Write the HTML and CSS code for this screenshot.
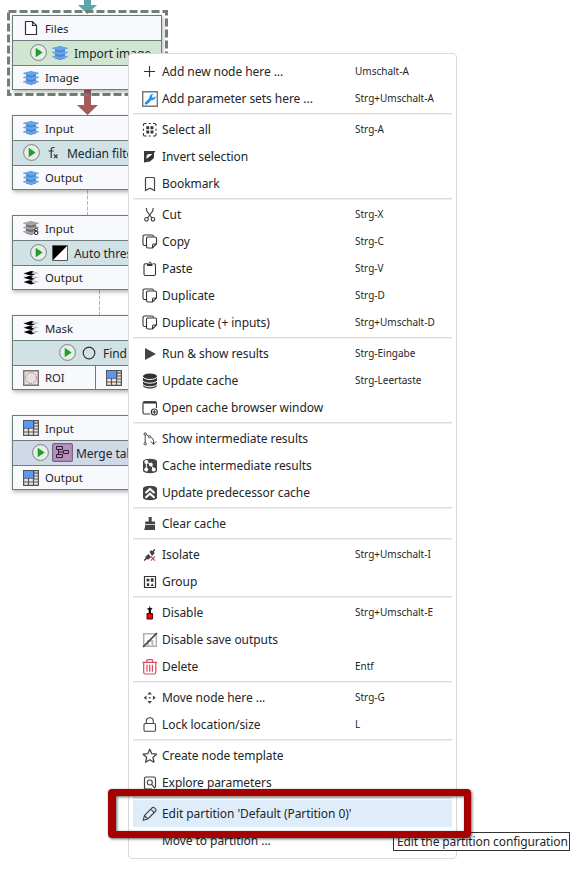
FILE: index.html
```html
<!DOCTYPE html>
<html lang="en">
<head>
<meta charset="utf-8">
<title>Node menu</title>
<link rel="stylesheet" href="styles.css">
</head>
<body>
<svg class="defs" width="0" height="0">
  <symbol id="stack" viewBox="0 0 16 16"><path d="M3 3h10v10.500L8 15l-5-1.500z" fill="#4a84ca"/><g fill="#67a5ea"><path d="M5 1.800 8 .8l3 1 4.800.9v1L11 5 8 5.700 5 5 .2 3.700v-1z"/><path d="M.2 7 3 6.300l5 1.300 5-1.300 2.800.7v1L11 9.300l-3 .7-3-.7L.2 8z"/><path d="M.2 11.300 3 10.600l5 1.300 5-1.300 2.800.7v1L11 13.600l-3 .7-3-.7-4.800-1.300z"/></g></symbol>
  <symbol id="graystack" viewBox="0 0 16 16"><path d="M3 3h10v10.500L8 15l-5-1.500z" fill="#6a6a6a"/><g fill="#a5a5a5"><path d="M5 1.800 8 .8l3 1 4.800.9v1L11 5 8 5.700 5 5 .2 3.700v-1z"/><path d="M.2 7 3 6.300l5 1.300 5-1.300 2.800.7v1L11 9.300l-3 .7-3-.7L.2 8z"/><path d="M.2 11.300 3 10.600l5 1.300 5-1.300 2.800.7v1L11 13.600l-3 .7-3-.7-4.800-1.300z"/></g><g fill="#fff" stroke="#222"><circle cx="13.200" cy="9.500" r="1.400"/><circle cx="13.200" cy="13" r="1.700"/></g></symbol>
  <symbol id="maskstack" viewBox="0 0 16 16"><g fill="#000"><path d="M.5 3.500 8 1l3 .6-2.500 1.700L12 4.600 8 5.800z"/><path d="M.5 7.800 6 6l4 .2-1.500 1.400L12 8.900 8 10.100z"/><path d="M.5 12.100 6 10.300l4 .2-1.500 1.400 3.500 1.300-4 1.200z"/></g><g fill="#c0c0c0"><path d="m11.500 1.700 4.300 1.300-3.500 1.300-2.600-.9zM.2 2.700 4 1.800l-2.500 1z"/><path d="m12 6.200 3.800 1.200-3.500 1.200-2.600-.9zM.2 7 3 6.200l-1.500 1z"/><path d="m12 10.500 3.800 1.200-3.500 1.200-2.600-.9zM.2 11.300l2.800-.8-1.500 1z"/></g></symbol>
  <symbol id="table" viewBox="0 0 16 16"><path d="M.6.6h14.800v14.800H.6z" fill="#e8e8e8" stroke="#555" stroke-width="1.200"/><path d="M5.500 8v7.500M10.500 0v15.500M.5 12h15M10.500 3.200h5M10.500 6h5M10.500 9h5" stroke="#555" stroke-width="1.200" fill="none"/><path d="M1 1h9v6.500H1z" fill="#5599f8"/><path d="M.5 8.200h10.200V.5" stroke="#555" stroke-width="1.300" fill="none"/></symbol>
  <symbol id="play" viewBox="0 0 17 17"><circle cx="8.500" cy="8.500" r="7.900" fill="#e9eeea" stroke="#7b7f7c"/><path d="M5.700 3.800v9.400l7-4.700z" fill="#20a02b"/></symbol>
  <symbol id="file" viewBox="0 0 16 16"><path d="M2.500 1.500h7l4 4v9h-11zM9.500 1.500v4h4" fill="#fff" stroke="#333" stroke-width="1.200"/></symbol>
  <symbol id="roi" viewBox="0 0 16 16"><path d="M.7.7h14.600v14.600H.7z" fill="#e3e3e3" stroke="#777" stroke-width="1.400"/><circle cx="8" cy="8" r="5.400" fill="none" stroke="#e75c5c" stroke-dasharray="1.400 1"/></symbol>
  <symbol id="threshold" viewBox="0 0 16 16"><path d="M.5.500h15v15H.5z" fill="#fff" stroke="#555"/><path d="M1 1h14L1 15z"/></symbol>
  <symbol id="circle" viewBox="0 0 14 14"><circle cx="7" cy="7" r="5.800" fill="none" stroke="#333" stroke-width="1.200"/></symbol>
  <symbol id="merge" viewBox="0 0 21 19"><rect x=".6" y=".6" width="19.800" height="17.800" rx="1.500" fill="#b98fc0" stroke="#74667c" stroke-width="1.200"/><path d="M4.500 3.500h6v3h-6zM4.500 11.500h6v3h-6zM11.500 7.500h5v3h-5zM6.500 6.500v5M6.500 9h5" fill="none" stroke="#2b1f33"/></symbol>
  <symbol id="fx" viewBox="0 0 12 16"><path d="M7.500 2.700Q4.200 1.800 4.200 5v8M1.500 6h5.200" fill="none" stroke="#333" stroke-width="1.200"/><path d="m7 9.500 3.500 3.700M10.500 9.500 7 13.200" stroke="#333" stroke-width="1.100"/></symbol>
  <symbol id="plus" viewBox="0 0 16 16"><path d="M7.500 2v11M2 7.500h11" stroke="#333" stroke-width="1.100"/></symbol>
  <symbol id="wrench" viewBox="0 0 16 16"><path d="M.7.7h14.600v14.600H.7z" fill="#fff" stroke="#777" stroke-width="1.400"/><path d="M3 11.400 7.500 7C7 4.500 9 2.400 11.700 3L9.900 4.800l.4 1.500 1.400.4 1.700-1.800c.6 2.700-1.500 4.600-3.900 4.100L5 13.400c-1.400.800-3-.8-2-2z" fill="#2191ee"/></symbol>
  <symbol id="selectall" viewBox="0 0 16 16"><path d="M1.500 4V2.800q0-1.300 1.300-1.300H4.500M11 1.500h1.700q1.300 0 1.300 1.300V4M14 11v1.700q0 1.300-1.300 1.300H11M4.500 14H2.800q-1.300 0-1.300-1.300V11M6.700 1.500h2M6.700 14h2M1.500 6.700v2M14 6.700v2" fill="none" stroke="#333" stroke-width="1.100"/><path d="M4.300 4.300h2.900v2.900H4.300zM8.500 4.300h2.900v2.900H8.500zM4.300 8.500h2.900v2.900H4.300zM8.500 8.500h2.900v2.900H8.500z" fill="#333"/></symbol>
  <symbol id="invert" viewBox="0 0 16 16"><path d="M2 2h11.500L12 4v5l-4 3.500L2 13.500z" fill="#3a3a3a"/><path d="M4.500 10V8q0-3 3-3h3z" fill="#fff"/><path d="m5 11 6-6v2.500q0 3.500-3.500 3.500z" fill="#333"/></symbol>
  <symbol id="bookmark" viewBox="0 0 16 16"><path d="M3.500 14.500V2.500q0-1 1-1h7q1 0 1 1v12L8 12.200z" fill="none" stroke="#444" stroke-width="1.200"/></symbol>
  <symbol id="cut" viewBox="0 0 16 16"><g fill="none" stroke="#444" stroke-width="1.200"><path d="m4.300 1 .5 3 5.200 7M11.200 1l-.5 3-5.200 7"/><circle cx="4.500" cy="12.300" r="1.800"/><circle cx="11" cy="12.300" r="1.800"/></g></symbol>
  <symbol id="copy" viewBox="0 0 16 16"><g fill="none" stroke="#333" stroke-width="1.100"><path d="M4 11.500H2.500q-1.500 0-1.500-1.500V2.500Q1 1 2.500 1H10q1.500 0 1.500 1.500"/><path d="M14.500 10V4.500q0-1.500-1.500-1.500H6q-1.500 0-1.500 1.500v8Q4.500 14 6 14h4.500zM10.500 14v-2.700q0-1.300 1.300-1.300h2.700"/></g></symbol>
  <symbol id="paste" viewBox="0 0 16 16"><path d="M5 2.700H3.500Q2 2.700 2 4.200V13q0 1.500 1.500 1.500h8.500q1.500 0 1.500-1.500V4.200q0-1.500-1.500-1.500H11" fill="none" stroke="#333" stroke-width="1.100"/><path d="M5 2.500h1.600Q6.800.5 8 .5t1.400 2H10.500V5H5z" fill="#333"/><circle cx="7.800" cy="2.300" r=".7" fill="#fff"/></symbol>
  <symbol id="run" viewBox="0 0 16 16"><path d="M3 2v12l11-6z" fill="#444"/></symbol>
  <symbol id="db" viewBox="0 0 16 16"><path d="M1 3.500v9c0 4 14 4 14 0v-9z" fill="#333"/><ellipse cx="8" cy="3.300" rx="7" ry="2.800" fill="#333"/><path d="M1 4.200c2 3 12 3 14 0M1 7.900c2 3 12 3 14 0M1 11.500c2 3 12 3 14 0" fill="none" stroke="#fff"/></symbol>
  <symbol id="window" viewBox="0 0 16 16"><path d="M8 14H2.500Q1 14 1 12.500v-9Q1 1.700 2.500 1.700h10.500q1.500 0 1.500 1.800V8" fill="none" stroke="#333" stroke-width="1.100"/><path d="M1.500 1.500h12.500v2H1.500z" fill="#333"/><circle cx="12.300" cy="12" r="3" fill="#fff" stroke="#333" stroke-width="1.200"/><path d="M10.500 12h3.600M12.300 10.200v3.600" stroke="#333" stroke-width="1.200"/></symbol>
  <symbol id="inter" viewBox="0 0 16 16"><g fill="none" stroke="#444"><circle cx="3.200" cy="3" r="1.200"/><circle cx="3.200" cy="12.700" r="1.200"/><circle cx="7.500" cy="5.700" r="1.100"/><path d="M3.200 4.500v7M4.400 3.700l2.200 1.400M8.500 6.300q3 .9 3 3.400v3.600M8.800 10.500 11.500 13.300l2.700-2.800"/></g></symbol>
  <symbol id="cacheinter" viewBox="0 0 16 16"><path d="M1 3C3 0 13 0 15 3v10c-2 3-12 3-14 0z" fill="#444"/><g fill="#fff"><circle cx="4.300" cy="4" r="2"/><circle cx="4.300" cy="11.500" r="2"/><circle cx="8.800" cy="6.500" r="1.900"/><circle cx="11.700" cy="11.500" r="2"/></g><path d="M4.300 4v7M4.300 4l4.500 2.500 2.900 5" fill="none" stroke="#fff"/></symbol>
  <symbol id="predcache" viewBox="0 0 16 16"><path d="M1 3C3 0 13 0 15 3v10c-2 3-12 3-14 0z" fill="#444"/><path d="m3.500 8 4.500-4 4.500 4M3.500 12.800l4.500-4 4.500 4" fill="none" stroke="#fff" stroke-width="2.200"/></symbol>
  <symbol id="clear" viewBox="0 0 16 16"><path d="M6.700 1h3v4.500h3.300V8H3.200V5.500h3.500zM3.200 8.800H13v5.200H2q1.200-2 1.200-5.200z" fill="#444"/></symbol>
  <symbol id="isolate" viewBox="0 0 16 16"><path d="m2 13.500 3-2.500M10.500 5l2.500-2.700" stroke="#333" stroke-width="1.200"/><path d="m3.500 9.500 3-2.500L9 10l-2.500 2.500-3-.5zM7.500 5 9 3.200l3 1.200.5 2L10 9z" fill="#444"/><path d="m8.800 9.500 4.200 4.200M13 9.500l-4.200 4.200" stroke="#d94b5b" stroke-width="1.200"/></symbol>
  <symbol id="group" viewBox="0 0 16 16"><path d="M2.500 2.500h11v11h-11z" fill="#fff" stroke="#333" stroke-width="1.200"/><circle cx="6" cy="6" r="1.600" fill="#333"/><path d="M8.800 4.300h2.700v3.500H8.800zM4.900 9.200h2.300V12H4.900zM10.200 9.200l1.500 2.800H8.700z" fill="#333"/></symbol>
  <symbol id="disable" viewBox="0 0 16 16"><path d="M5 3h5.500L9 5.500V9H6.700V5.500z" fill="#222"/><path d="M7.300 1.500h1V9h-1z"/><path d="M5 8.500h5.500V14H5z" fill="red" stroke="#500"/></symbol>
  <symbol id="nosave" viewBox="0 0 16 16"><path d="M1.700 1.700h12.600v12.600H1.700z" fill="none" stroke="#b0b0b0" stroke-width="1.500"/><path d="M5 9h2v5H5zM9.500 9h2v5h-2zM5 8h6.500v2H5z" fill="#bbb"/><path d="M1 15 15 1" stroke="#444" stroke-width="1.700"/></symbol>
  <symbol id="trash" viewBox="0 0 16 16"><path d="M.5 3.300h14.500M4.800 3.300v-1.600q0-1 1-1h3.900q1 0 1 1v1.600M1.700 3.300v9.900q0 1.800 1.800 1.800h8.500q1.800 0 1.800-1.800V3.300M5 5.800v7M7.700 5.800v7M10.400 5.800v7" fill="none" stroke="#d94b5b" stroke-width="1.200"/></symbol>
  <symbol id="move" viewBox="0 0 16 16"><path d="m7.700 1.700 2.300 2.800H5.400zM7.700 13.700l2.300-2.800H5.400zM1.700 7.700l2.800-2.300V10zM13.700 7.700l-2.800-2.300V10zM6.900 6.900h1.700v1.700H6.900z" fill="#444"/></symbol>
  <symbol id="lock" viewBox="0 0 16 16"><path d="M3.300 6.500h9q1.200 0 1.200 1.300V13q0 1.300-1.200 1.300h-9Q2 14.300 2 13V7.800Q2 6.500 3.300 6.500zM4.300 6.500V4.300c0-4.800 7-4.800 7 0v2.200" fill="none" stroke="#444" stroke-width="1.100"/></symbol>
  <symbol id="star" viewBox="0 0 16 16"><path d="m7.800 1.300 2 4.400 4.700.500-3.600 3.200 1.100 4.800-4.200-2.400-4.200 2.400 1.100-4.800-3.600-3.200 4.700-.5z" fill="none" stroke="#444" stroke-width="1.300" stroke-linejoin="round"/></symbol>
  <symbol id="explore" viewBox="0 0 16 16"><path d="M10 14H4q-1.500 0-1.500-1.500v-9Q2.500 2 4 2h8q1.500 0 1.500 1.500v9" fill="none" stroke="#444" stroke-width="1.200"/><circle cx="7.800" cy="7.500" r="2.500" fill="none" stroke="#444" stroke-width="1.100"/><path d="m9.500 9.300 3.500 4" stroke="#444" stroke-width="1.100"/></symbol>
  <symbol id="pencil" viewBox="0 0 16 16"><path d="m1.200 14.300 1.200-4.800L9.700 2.100q1.500-1.500 3 0l.6.600q1.500 1.300 0 2.800L5.700 13zM8.700 3.100l3.600 3.600M2.400 9.500 5.700 13" fill="none" stroke="#444" stroke-width="1.100"/></symbol>
</svg>

<main class="canvas">
  <svg class="links" width="582" height="883">
    <path d="M84 0h7v5h6L87.500 14 78 5h6z" fill="#5aa6a8"/>
    <path d="M84 90h7v15h7L87.500 115 77 105h7z" fill="#a55a5c"/>
    <path d="M87.500 190v25M99.500 290v25" stroke="#b5b5b5" stroke-dasharray="4 1.500"/>
    <path d="M8.500 11.500h158v83H8.500z" fill="none" stroke="#728177" stroke-width="3" stroke-dasharray="8 3"/>
  </svg>

  <section class="node n1">
    <div class="slot"><svg><use href="#file"/></svg>Files</div>
    <div class="head green"><svg class="go"><use href="#play"/></svg><svg><use href="#stack"/></svg><span>Import image</span></div>
    <div class="slot"><svg><use href="#stack"/></svg>Image</div>
  </section>
  <section class="node n2">
    <div class="slot"><svg><use href="#stack"/></svg>Input</div>
    <div class="head teal"><svg class="go"><use href="#play"/></svg><svg class="fx"><use href="#fx"/></svg><span>Median filter</span></div>
    <div class="slot"><svg><use href="#stack"/></svg>Output</div>
  </section>
  <section class="node n3">
    <div class="slot"><svg><use href="#graystack"/></svg>Input</div>
    <div class="head teal"><svg class="go"><use href="#play"/></svg><svg><use href="#threshold"/></svg><span>Auto threshold</span></div>
    <div class="slot"><svg><use href="#maskstack"/></svg>Output</div>
  </section>
  <section class="node n4">
    <div class="slot"><svg><use href="#maskstack"/></svg>Mask</div>
    <div class="head teal"><svg class="go"><use href="#play"/></svg><svg class="ring"><use href="#circle"/></svg><span>Find</span></div>
    <div class="slot split"><div class="cell"><svg><use href="#roi"/></svg>ROI</div><div class="cell"><svg><use href="#table"/></svg></div></div>
  </section>
  <section class="node n5">
    <div class="slot"><svg><use href="#table"/></svg>Input</div>
    <div class="head blue"><svg class="go"><use href="#play"/></svg><svg class="wide"><use href="#merge"/></svg><span>Merge tables</span></div>
    <div class="slot"><svg><use href="#table"/></svg>Output</div>
  </section>

  <nav class="menu">
    <div class="item"><svg><use href="#plus"/></svg><span>Add new node here ...</span><kbd>Umschalt-A</kbd></div>
    <div class="item"><svg><use href="#wrench"/></svg><span>Add parameter sets here ...</span><kbd>Strg+Umschalt-A</kbd></div>
    <hr>
    <div class="item"><svg><use href="#selectall"/></svg><span>Select all</span><kbd>Strg-A</kbd></div>
    <div class="item"><svg><use href="#invert"/></svg><span>Invert selection</span></div>
    <div class="item"><svg><use href="#bookmark"/></svg><span>Bookmark</span></div>
    <hr>
    <div class="item"><svg><use href="#cut"/></svg><span>Cut</span><kbd>Strg-X</kbd></div>
    <div class="item"><svg><use href="#copy"/></svg><span>Copy</span><kbd>Strg-C</kbd></div>
    <div class="item"><svg><use href="#paste"/></svg><span>Paste</span><kbd>Strg-V</kbd></div>
    <div class="item"><svg><use href="#copy"/></svg><span>Duplicate</span><kbd>Strg-D</kbd></div>
    <div class="item"><svg><use href="#copy"/></svg><span>Duplicate (+ inputs)</span><kbd>Strg+Umschalt-D</kbd></div>
    <hr>
    <div class="item"><svg><use href="#run"/></svg><span>Run &amp; show results</span><kbd>Strg-Eingabe</kbd></div>
    <div class="item"><svg><use href="#db"/></svg><span>Update cache</span><kbd>Strg-Leertaste</kbd></div>
    <div class="item"><svg><use href="#window"/></svg><span>Open cache browser window</span></div>
    <hr>
    <div class="item"><svg><use href="#inter"/></svg><span>Show intermediate results</span></div>
    <div class="item"><svg><use href="#cacheinter"/></svg><span>Cache intermediate results</span></div>
    <div class="item"><svg><use href="#predcache"/></svg><span>Update predecessor cache</span></div>
    <hr>
    <div class="item"><svg><use href="#clear"/></svg><span>Clear cache</span></div>
    <hr>
    <div class="item"><svg><use href="#isolate"/></svg><span>Isolate</span><kbd>Strg+Umschalt-I</kbd></div>
    <div class="item"><svg><use href="#group"/></svg><span>Group</span></div>
    <hr>
    <div class="item"><svg><use href="#disable"/></svg><span>Disable</span><kbd>Strg+Umschalt-E</kbd></div>
    <div class="item"><svg><use href="#nosave"/></svg><span>Disable save outputs</span></div>
    <div class="item"><svg><use href="#trash"/></svg><span>Delete</span><kbd>Entf</kbd></div>
    <hr>
    <div class="item"><svg><use href="#move"/></svg><span>Move node here ...</span><kbd>Strg-G</kbd></div>
    <div class="item"><svg><use href="#lock"/></svg><span>Lock location/size</span><kbd>L</kbd></div>
    <hr>
    <div class="item"><svg><use href="#star"/></svg><span>Create node template</span></div>
    <div class="item"><svg><use href="#explore"/></svg><span>Explore parameters</span></div>
    <hr>
    <div class="item active"><svg><use href="#pencil"/></svg><span>Edit partition 'Default (Partition 0)'</span></div>
    <div class="item"><svg></svg><span>Move to partition ...</span></div>
  </nav>

  <div class="tooltip">Edit the partition configuration</div>
  <div class="marker"></div>
</main>
</body>
</html>
```
FILE: styles.css
```css
* { box-sizing: border-box; }
body {
  margin: 0;
  background: #fff;
  color: #232629;
  font: 12px "Noto Sans", sans-serif;
}
.defs { position: absolute; }
.canvas { position: relative; width: 582px; height: 883px; overflow: hidden; }
.links { position: absolute; left: 0; top: 0; }

.node {
  position: absolute;
  left: 12px;
  width: 150px;
  height: 75px;
  display: grid;
  grid-template-rows: 24px 24px 23px;
  gap: 1px;
  border: 1px solid #6d7b7b;
  background: #6d7b7b;
  box-shadow: 1px 2px 4px rgba(0, 0, 0, .3);
  font-size: 11.3px;
}
.n1 { top: 15px; }
.n2 { top: 115px; }
.n3 { top: 215px; }
.n4 { top: 315px; }
.n5 { top: 415px; }
.node svg { width: 16px; height: 16px; flex: none; }
.slot { display: flex; align-items: center; gap: 6px; padding-left: 10px; background: #f7f9fc; }
.head { display: flex; align-items: center; gap: 5px; overflow: hidden; white-space: nowrap; font-size: 12px; padding-left: 17px; }
.head svg { margin-top: -1px; }
.head span { margin-left: 1px; letter-spacing: -.05px; }
.head .go { width: 17px; height: 17px; }
.head .ring { width: 14px; height: 14px; }
.head .wide { width: 21px; height: 19px; }
.head .fx { width: 12px; margin: 0 2px 0 2px; }
.n2 .head { padding-left: 10px; }
.n4 .head { padding-left: 46px; gap: 6px; }
.n5 .head { padding-left: 19px; gap: 3px; }
.n5 .head span { margin-left: 0; }
.green { background: #d0e6d3; }
.teal { background: #d0e2e5; }
.blue { background: #d0d9e8; }
.split { padding: 0; gap: 1px; background: #6d7b7b; }
.cell { display: flex; align-items: center; gap: 6px; height: 100%; padding-left: 10px; background: #f7f9fc; }
.cell:first-child { width: 82px; }
.cell:last-child { flex: 1; }

.menu {
  position: absolute;
  left: 128px;
  top: 53px;
  width: 329px;
  height: 806px;
  padding: 4px;
  border: 1px solid #d9d9db;
  border-radius: 4px;
  background: #fff;
  letter-spacing: -.06px;
}
.item { display: grid; grid-template-columns: 16px 187px 1fr; column-gap: 4px; align-items: center; height: 27px; padding-left: 9px; white-space: nowrap; }
.item svg { width: 16px; height: 16px; }
.item kbd { font: 10px "Noto Sans", sans-serif; padding: 0 0 2px 2px; letter-spacing: 0; }
.active { background: #dfedfa; }
hr { height: 2px; margin: 1px 0; border: 0; border-top: 1px solid #dcdcde; background: #efeff0; }

.tooltip {
  position: absolute;
  left: 393px;
  top: 832px;
  width: 177px;
  height: 19px;
  padding-left: 3px;
  border: 1px solid #333;
  background: #fff;
  line-height: 17px;
  letter-spacing: -.1px;
  white-space: nowrap;
}
.marker {
  position: absolute;
  left: 108px;
  top: 789px;
  width: 363px;
  height: 49px;
  border: 7px solid #a60000;
  border-left-width: 8px;
  border-radius: 4px;
  box-shadow: 1px 1px 3px rgba(0, 0, 0, .6), inset 1px 1px 3px rgba(0, 0, 0, .6);
}
```
